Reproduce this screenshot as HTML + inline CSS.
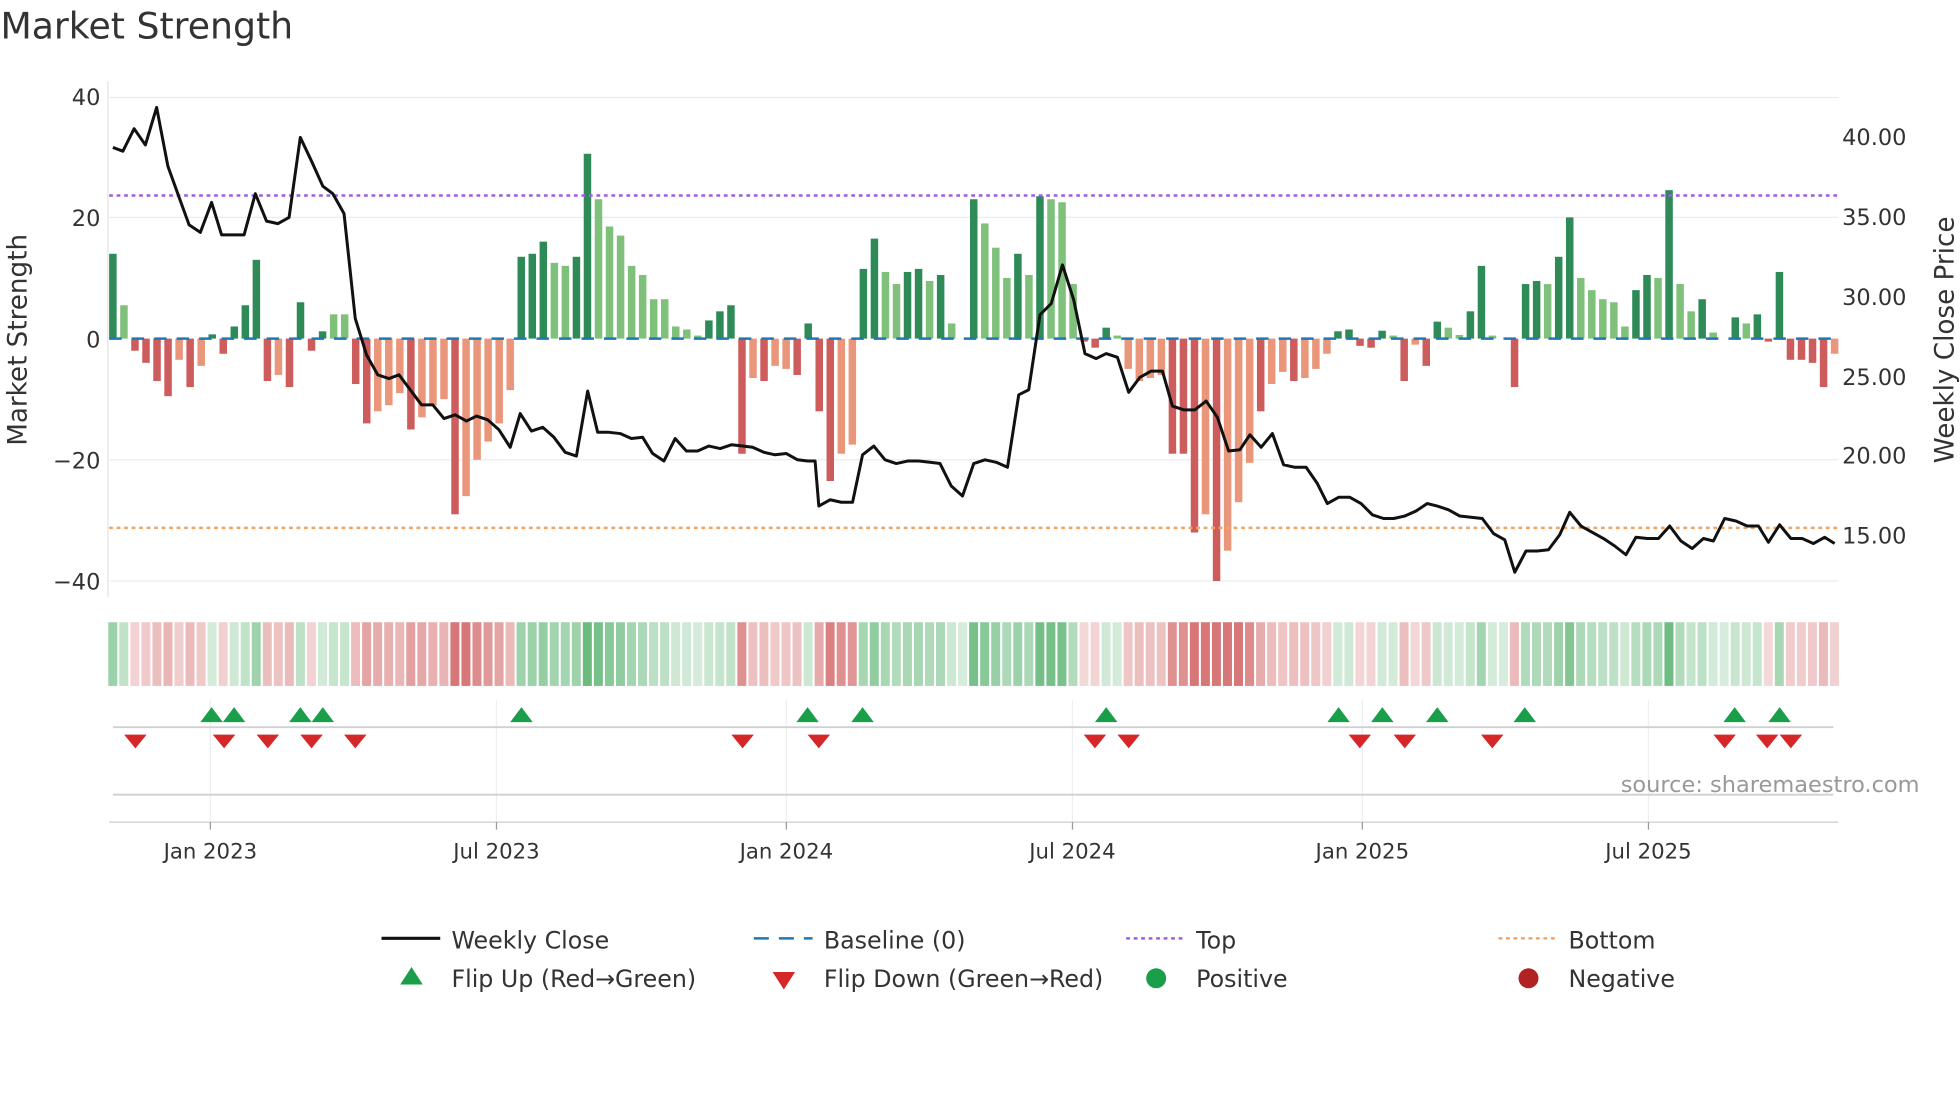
<!DOCTYPE html>
<html><head><meta charset="utf-8"><style>
html,body{margin:0;padding:0;background:#fff;width:1960px;height:1102px;overflow:hidden}
svg{display:block}
text{font-family:"DejaVu Sans","Liberation Sans",sans-serif;fill:#333}
</style></head><body>
<svg id="s" width="1960" height="1102" viewBox="0 0 1568 882" xmlns="http://www.w3.org/2000/svg">
<text x="0" y="31" font-size="29" fill="#333">Market Strength</text>
<g stroke="#ececec" stroke-width="1">
<line x1="87" y1="78" x2="1471" y2="78"/><line x1="87" y1="174" x2="1471" y2="174"/>
<line x1="87" y1="368" x2="1471" y2="368"/><line x1="87" y1="465" x2="1471" y2="465"/>
</g>
<line x1="86" y1="65" x2="86" y2="478" stroke="#e4e4e4"/>
<g font-size="18" text-anchor="end">
<text x="80" y="84">40</text><text x="80" y="181">20</text><text x="80" y="278">0</text>
<text x="80" y="375">−20</text><text x="80" y="472">−40</text>
</g>
<g font-size="18" text-anchor="start">
<text x="1474" y="116">40.00</text><text x="1474" y="180">35.00</text><text x="1474" y="244">30.00</text>
<text x="1474" y="308">25.00</text><text x="1474" y="371">20.00</text><text x="1474" y="435">15.00</text>
</g>
<text transform="translate(21,272) rotate(-90)" font-size="21" text-anchor="middle">Market Strength</text>
<text transform="translate(1563,272) rotate(-90)" font-size="21" text-anchor="middle">Weekly Close Price</text>
<g id="bars"></g>
<line x1="87" y1="271" x2="1471" y2="271" stroke="#1f77b4" stroke-width="2" stroke-dasharray="10,8"/>
<line x1="87" y1="156.5" x2="1471" y2="156.5" stroke="#9b5de5" stroke-width="2" stroke-dasharray="3,3"/>
<line x1="87" y1="422.5" x2="1471" y2="422.5" stroke="#f4a460" stroke-width="2" stroke-dasharray="3,3"/>
<polyline id="price" fill="none" stroke="#111" stroke-width="2.4" stroke-linejoin="round"/>
<g id="heat"></g>
<g stroke="#eee"><line x1="168" y1="560" x2="168" y2="658"/><line x1="397" y1="560" x2="397" y2="658"/><line x1="629" y1="560" x2="629" y2="658"/><line x1="858" y1="560" x2="858" y2="658"/><line x1="1090" y1="560" x2="1090" y2="658"/><line x1="1319" y1="560" x2="1319" y2="658"/></g>
<line x1="90" y1="582" x2="1467" y2="582" stroke="#d0d0d0" stroke-width="1.5"/>
<line x1="90" y1="636" x2="1467" y2="636" stroke="#d0d0d0" stroke-width="1.5"/>
<line x1="87" y1="658" x2="1471" y2="658" stroke="#ccc"/>
<g stroke="#999"><line x1="168" y1="658" x2="168" y2="664"/><line x1="397" y1="658" x2="397" y2="664"/><line x1="629" y1="658" x2="629" y2="664"/><line x1="858" y1="658" x2="858" y2="664"/><line x1="1090" y1="658" x2="1090" y2="664"/><line x1="1319" y1="658" x2="1319" y2="664"/></g>
<g id="mk"></g>
<text x="1536" y="634" font-size="18" text-anchor="end" style="fill:#999">source: sharemaestro.com</text>
<g font-size="17" text-anchor="middle">
<text x="168" y="687">Jan 2023</text><text x="397" y="687">Jul 2023</text><text x="629" y="687">Jan 2024</text>
<text x="858" y="687">Jul 2024</text><text x="1090" y="687">Jan 2025</text><text x="1319" y="687">Jul 2025</text>
</g>
<g font-size="19">
<line x1="305" y1="751" x2="352" y2="751" stroke="#111" stroke-width="2.5"/><text x="361" y="759">Weekly Close</text>
<line x1="603" y1="751" x2="650" y2="751" stroke="#1f77b4" stroke-width="2" stroke-dasharray="12,8"/><text x="659" y="759">Baseline (0)</text>
<line x1="901" y1="751" x2="948" y2="751" stroke="#9b5de5" stroke-width="2" stroke-dasharray="3,3"/><text x="957" y="759">Top</text>
<line x1="1199" y1="751" x2="1246" y2="751" stroke="#f4a460" stroke-width="2" stroke-dasharray="3,3"/><text x="1255" y="759">Bottom</text>
<polygon points="320,788 338,788 329,774" fill="#1a9e4a"/><text x="361" y="790">Flip Up (Red→Green)</text>
<polygon points="618,778 636,778 627,792" fill="#d62728"/><text x="659" y="790">Flip Down (Green→Red)</text>
<circle cx="925" cy="783" r="8" fill="#1a9e4a"/><text x="957" y="790">Positive</text>
<circle cx="1223" cy="783" r="8" fill="#b22222"/><text x="1255" y="790">Negative</text>
</g>
</svg>
<script>
var NS="http://www.w3.org/2000/svg";
function el(t,a,p){var e=document.createElementNS(NS,t);for(var k in a)e.setAttribute(k,a[k]);document.getElementById(p).appendChild(e);}
var B=[[14,1],[5.5,0],[-2,1],[-4,1],[-7,1],[-9.5,1],[-3.5,0],[-8,1],[-4.5,0],[0.7,1],[-2.5,1],[2,1],[5.5,1],[13,1],[-7,1],[-6,0],[-8,1],[6,1],[-2,1],[1.2,1],[4,0],[4,0],[-7.5,1],[-14,1],[-12,0],[-11,0],[-9,0],[-15,1],[-13,0],[-11,0],[-10,0],[-29,1],[-26,0],[-20,0],[-17,0],[-14,0],[-8.5,0],[13.5,1],[14,1],[16,1],[12.5,0],[12,0],[13.5,1],[30.5,1],[23,0],[18.5,0],[17,0],[12,0],[10.5,0],[6.5,0],[6.5,0],[2,0],[1.5,0],[0.5,0],[3,1],[4.5,1],[5.5,1],[-19,1],[-6.5,0],[-7,1],[-4.5,0],[-5,0],[-6,1],[2.5,1],[-12,1],[-23.5,1],[-19,0],[-17.5,0],[11.5,1],[16.5,1],[11,0],[9,0],[11,1],[11.5,1],[9.5,0],[10.5,1],[2.5,0],[0,0],[23,1],[19,0],[15,0],[10,0],[14,1],[10.5,0],[23.5,1],[23,0],[22.5,0],[9,0],[-0.5,1],[-1.5,1],[1.8,1],[0.5,0],[-5,0],[-7,0],[-6.5,0],[-6,0],[-19,1],[-19,1],[-32,1],[-29,0],[-40,1],[-35,0],[-27,0],[-20.5,0],[-12,1],[-7.5,0],[-5.5,0],[-7,1],[-6.5,0],[-5,0],[-2.5,0],[1.2,1],[1.5,1],[-1.2,1],[-1.5,1],[1.3,1],[0.5,0],[-7,1],[-1,0],[-4.5,1],[2.8,1],[1.8,0],[0.6,0],[4.5,1],[12,1],[0.5,0],[0,0],[-8,1],[9,1],[9.5,1],[9,0],[13.5,1],[20,1],[10,0],[8,0],[6.5,0],[6,0],[2,0],[8,1],[10.5,1],[10,0],[24.5,1],[9,0],[4.5,0],[6.5,1],[1,0],[0,0],[3.5,1],[2.5,0],[4,1],[-0.5,1],[11,1],[-3.5,1],[-3.5,1],[-4,1],[-8,1],[-2.5,0]];
var n=B.length, x0=90, step=(1468-90)/(n-1);
B.forEach(function(b,i){var x=x0+i*step,v=b[0],h=Math.abs(v)*4.85;
 var c=v>=0?(b[1]?"#2e8b57":"#7fc07a"):(b[1]?"#cd5c5c":"#e9967a");
 if(h>0.3)el("rect",{x:x-3,y:v>=0?271-h:271,width:6,height:h,fill:c},"bars");
 var a=Math.min(0.8,0.22+Math.abs(v)/40*0.9);
 var hc=v>=0?"rgba(70,170,95,"+a+")":"rgba(205,85,85,"+a+")";
 el("rect",{x:x-3.7,y:498,width:7.2,height:51,fill:hc},"heat");
});
var P=[[90,118],[98,121],[107,103],[116,116],[125,86],[134,133],[143,158],[151,180],[160,186],[169,162],[177,188],[186,188],[195,188],[204,155],[213,177],[222,179],[231,174],[240,110],[249,129],[258,149],[266,155],[275,171],[284,255],[293,284],[302,300],[311,303],[319,300],[328,312],[337,324],[346,324],[355,335],[364,332],[373,337],[381,333],[390,336],[399,344],[408,358],[416,331],[425,345],[434,342],[443,350],[452,362],[461,365],[470,313],[478,346],[487,346],[496,347],[505,351],[514,350],[522,363],[531,369],[540,351],[549,361],[558,361],[567,357],[576,359],[585,356],[594,357],[602,358],[611,362],[620,364],[629,363],[638,368],[646,369],[652,369],[655,405],[664,400],[673,402],[682,402],[690,364],[699,357],[708,368],[717,371],[726,369],[735,369],[744,370],[752,371],[761,389],[770,397],[779,371],[788,368],[797,370],[806,374],[815,316],[823,312],[832,252],[841,243],[850,212],[859,240],[868,283],[877,287],[885,283],[894,286],[903,314],[912,302],[921,297],[930,297],[938,325],[947,328],[956,328],[965,321],[974,334],[983,361],[992,360],[1000,348],[1009,358],[1018,347],[1027,372],[1036,374],[1045,374],[1054,387],[1062,403],[1071,398],[1080,398],[1089,403],[1098,412],[1107,415],[1115,415],[1124,413],[1133,409],[1142,403],[1150,405],[1159,408],[1168,413],[1177,414],[1186,415],[1195,427],[1204,432],[1212,458],[1221,441],[1230,441],[1239,440],[1248,428],[1256,410],[1265,421],[1274,426],[1283,431],[1292,437],[1301,444],[1309,430],[1318,431],[1327,431],[1336,421],[1345,433],[1354,439],[1363,431],[1371,433],[1380,415],[1389,417],[1398,421],[1407,421],[1415,434],[1424,420],[1433,431],[1442,431],[1451,435],[1460,430],[1468,435]];
document.getElementById("price").setAttribute("points",P.map(function(p){return p.join(",")}).join(" "));
[169,187,240,258,417,646,690,885,1071,1106,1150,1220,1388,1424].forEach(function(x){el("polygon",{points:(x-9)+",578 "+(x+9)+",578 "+x+",566",fill:"#1a9e4a"},"mk");});
[108,179,214,249,284,594,655,876,903,1088,1124,1194,1380,1414,1433].forEach(function(x){el("polygon",{points:(x-9)+",588 "+(x+9)+",588 "+x+",599",fill:"#d62728"},"mk");});
</script>
</body></html>
